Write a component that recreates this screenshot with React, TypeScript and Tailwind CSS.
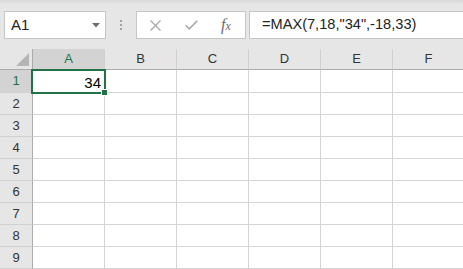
import React from "react";

const columns = ["A", "B", "C", "D", "E", "F"];
const rows = [1, 2, 3, 4, 5, 6, 7, 8, 9];

const FormulaBar = () => (
    <div className="h-[49px] flex items-start pt-[11px] bg-[linear-gradient(to_bottom,#d8d8d8,#e6e6e6_4px)]">
        <div className="ml-[4px] w-[102px] h-[28px] bg-white border border-[#c6c6c6] flex items-center justify-between pl-[6px] pr-[5px]">
            <span className="text-[15px] text-[#222]">A1</span>
            <svg width="8" height="5" viewBox="0 0 8 5">
                <path d="M0 0 L8 0 L4 4.5 Z" fill="#6e6e6e" />
            </svg>
        </div>
        <div className="ml-[14px] w-[2px] h-[28px] flex flex-col items-center justify-center gap-[2px]">
            <span className="w-[2px] h-[2px] bg-[#a3a3a3]"></span>
            <span className="w-[2px] h-[2px] bg-[#a3a3a3]"></span>
            <span className="w-[2px] h-[2px] bg-[#a3a3a3]"></span>
        </div>
        <div className="ml-[14px] w-[110px] h-[28px] bg-white border border-[#c6c6c6] flex items-center">
            <svg className="ml-[13px]" width="11" height="11" viewBox="0 0 11 11">
                <path d="M0.5 0.5 L10.5 10.5 M10.5 0.5 L0.5 10.5" stroke="#a8a8a8" strokeWidth="1.3" fill="none" />
            </svg>
            <svg className="ml-[24px]" width="13" height="10" viewBox="0 0 13 10">
                <path d="M0.7 5.2 L4.3 8.8 L12.3 0.8" stroke="#a8a8a8" strokeWidth="1.6" fill="none" />
            </svg>
            <span className="ml-[23px] font-['Liberation_Serif',serif] italic text-[16px] text-[#6a6a6a] leading-none">
                f<span className="text-[12px]">x</span>
            </span>
        </div>
        <div className="ml-[3px] flex-1 h-[28px] bg-white border border-[#c6c6c6] border-r-0 flex items-center pl-[12px]">
            <span className="text-[14.6px] text-[#222] whitespace-nowrap">=MAX(7,18,"34",-18,33)</span>
        </div>
    </div>
);

const Grid = () => (
    <div className="relative">
        <div className="flex h-[21px]">
            <div className="w-[33px] shrink-0 bg-[#e6e6e6] border-r border-b border-[#ababab] flex items-end justify-end pr-[3px] pb-[3px]">
                <svg width="13" height="13" viewBox="0 0 13 13">
                    <path d="M13 0 L13 13 L0 13 Z" fill="#b5b5b5" />
                </svg>
            </div>
            {columns.map((c) => (
                <div
                    key={c}
                    className={`w-[72px] shrink-0 border-r border-b border-r-[#d0d0d0] border-b-[#ababab] flex items-center justify-center text-[13px] ${c === "A" ? "bg-[#d3d3d3] text-[#217346]" : "bg-[#e6e6e6] text-[#333]"}`}
                >
                    {c}
                </div>
            ))}
        </div>
        {rows.map((r) => (
            <div key={r} className={`flex ${r === 1 ? "h-[23px]" : "h-[22px]"}`}>
                <div
                    className={`w-[33px] shrink-0 border-r border-b border-r-[#ababab] border-b-[#d0d0d0] flex items-center justify-center text-[13px] ${r === 1 ? "bg-[#d3d3d3] text-[#217346]" : "bg-[#e6e6e6] text-[#333]"}`}
                >
                    {r}
                </div>
                {columns.map((c) => (
                    <div key={c} className="w-[72px] shrink-0 border-r border-b border-[#d4d4d4] flex items-end justify-end pr-[3px] pb-[2px]">
                        {r === 1 && c === "A" ? <span className="text-[15px] leading-none text-black">34</span> : null}
                    </div>
                ))}
            </div>
        ))}
        <div className="absolute left-[31px] top-[20px] w-[75px] h-[25px] border-2 border-[#217346]"></div>
        <div className="absolute left-[101px] top-[40px] w-[7px] h-[7px] bg-[#217346] border border-white"></div>
    </div>
);

export default function App() {
    return (
        <div className="w-[463px] h-[269px] overflow-hidden bg-white font-['Liberation_Sans',Arial,sans-serif]">
            <FormulaBar />
            <Grid />
        </div>
    );
}
